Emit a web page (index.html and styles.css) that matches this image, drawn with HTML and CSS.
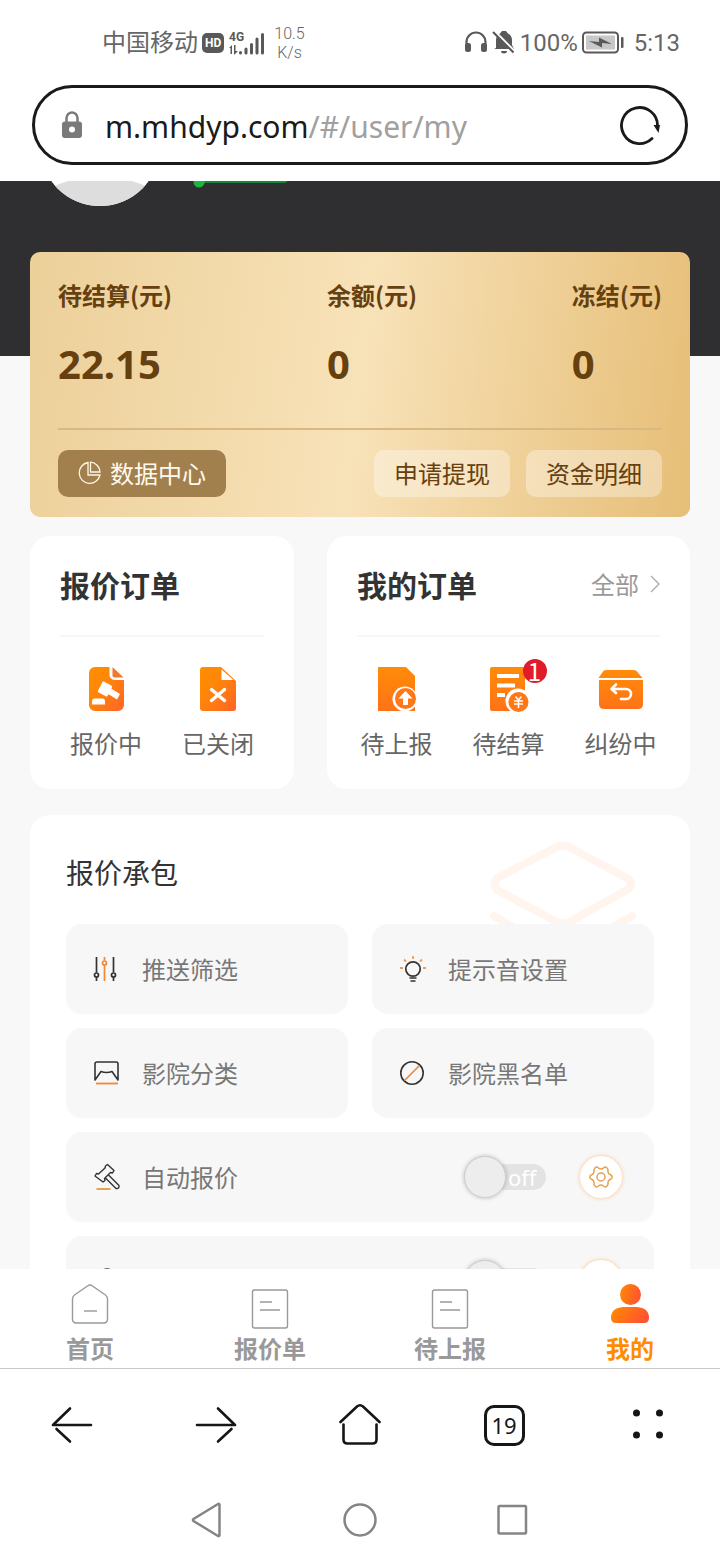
FILE: index.html
```html
<!DOCTYPE html>
<html lang="zh-CN">
<head>
<meta charset="utf-8">
<meta name="viewport" content="width=device-width, initial-scale=1">
<title>我的</title>
<link rel="stylesheet" href="styles.css">
</head>
<body>
<svg class="defs" width="0" height="0" aria-hidden="true">
  <defs>
    <linearGradient id="orange" x1="0" y1="0" x2="1" y2="1"><stop offset="0" stop-color="#ff8f00"/><stop offset="0.4" stop-color="#ff8609"/><stop offset="1" stop-color="#ff6428"/></linearGradient>
    <linearGradient id="orange-down" x1="0" y1="0" x2="0" y2="1"><stop offset="0" stop-color="#ff8c08"/><stop offset="1" stop-color="#ff7218"/></linearGradient>
    <linearGradient id="orange-side" x1="0" y1="0" x2="1" y2="0.3"><stop offset="0" stop-color="#ff8c00"/><stop offset="1" stop-color="#ff5530"/></linearGradient>
    <symbol id="gear" viewBox="0 0 24 24"><path d="M6 3Q7.500 1.200 9.500 3Q12 5 14.500 3Q16.500 1.200 18 3Q19.200 4 19 6Q18.800 8.500 21 9.500Q23.500 10.500 23 12Q23.500 13.500 21 14.500Q18.800 15.500 19 18Q19.200 20 18 21Q16.500 22.800 14.500 21Q12 19 9.500 21Q7.500 22.800 6 21Q4.800 20 5 18Q5.200 15.500 3 14.500Q.5 13.500 1 12Q.5 10.500 3 9.500Q5.200 8.500 5 6Q4.800 4 6 3Z" fill="none" stroke="#e6a04c" stroke-width="1.500" stroke-linejoin="round"/><circle cx="12" cy="12" r="4" fill="none" stroke="#e6a04c" stroke-width="1.500"/></symbol>
  </defs>
</svg>

<header class="status">
  <div class="status-group">
    <span class="carrier">中国移动</span>
    <span class="hd">HD</span>
    <svg width="38" height="28" viewBox="0 0 38 28" fill="#595959" role="img" aria-label="4G">
      <text class="net" x="1" y="12">4G</text>
      <path d="M1 19l3-3v9H2.500v-6zM6 16h1.500v6H10l-3.500 3.500H6z"/>
      <g stroke="#595959" stroke-width="3" stroke-linecap="round"><path d="M13.500 23.500v.5M19 20v4M24.500 15.500v8.500M30 10v14M35.500 5.500v18.500" transform="translate(-1 0)"/></g>
    </svg>
    <span class="speed">10.5<br>K/s</span>
  </div>
  <div class="status-group">
    <svg width="24" height="28" viewBox="0 0 24 28"><path d="M2.500 19v-6a9.500 9.500 0 0 1 19 0v6" fill="none" stroke="#595959" stroke-width="2.200"/><rect x="1" y="14" width="6" height="9" rx="2.500" fill="#595959"/><rect x="17" y="14" width="6" height="9" rx="2.500" fill="#595959"/></svg>
    <svg width="24" height="28" viewBox="0 0 24 28"><path d="M4 19V11a8 7.500 0 0 1 4-6.500L10 2h4l2 2.500a8 7.500 0 0 1 4 6.500v5l2 4H2zM9 22h6a3 2.500 0 0 1-6 0z" fill="#595959"/><path d="M1 1l23 23" stroke="#fff" stroke-width="3"/><path d="M1 3l20.500 20.500" stroke="#595959" stroke-width="2.200"/></svg>
    <span>100%</span>
    <svg class="battery" width="42" height="24" viewBox="0 0 42 24"><rect x="1" y="1.500" width="35" height="20" rx="3.500" fill="none" stroke="#595959" stroke-width="2"/><rect x="4" y="4.500" width="29" height="14" fill="#c8c8c8"/><path d="M7 10l10 1V6.500L30 13l-10-1v4.500z" fill="#595959"/><rect x="39" y="6" width="2.500" height="11" rx="1" fill="#595959"/></svg>
    <time>5:13</time>
  </div>
</header>

<div class="address-bar">
  <svg width="22" height="28" viewBox="0 0 22 28"><path d="M5.500 13V7a5.500 5.500 0 0 1 11 0v6" fill="none" stroke="#7a7a7a" stroke-width="2.500"/><path d="M4 10.500h14a3 3 0 0 1 3 3V24a3 3 0 0 1-3 3H4a3 3 0 0 1-3-3V13.500a3 3 0 0 1 3-3zM11 15.500a3 3 0 1 0 0 6 3 3 0 0 0 0-6z" fill="#7a7a7a" fill-rule="evenodd"/></svg>
  <button class="url" type="button">m.mhdyp.com<span>/#/user/my</span></button>
  <button class="plain" type="button" aria-label="刷新"><svg width="40" height="40" viewBox="0 0 40 40"><path d="M32 33.500A18 18 0 1 1 37.500 21" fill="none" stroke="#1a1a1a" stroke-width="2.800" stroke-linecap="round"/><path d="M33.500 20h6.500l-1.500 8z" fill="#1a1a1a"/></svg></button>
</div>

<main class="content">
  <section class="profile" aria-label="个人信息">
    <svg class="avatar" width="120" height="120" viewBox="0 0 120 120"><clipPath id="round"><circle cx="60" cy="60" r="60"/></clipPath><circle cx="60" cy="60" r="60" fill="#fff"/><ellipse cx="60" cy="124" rx="66" ry="33" fill="#dedddd" clip-path="url(#round)"/></svg>
    <svg class="level" width="96" height="32" viewBox="0 0 96 32"><path d="M0 0h96v23q0 4-4 4H12z" fill="#17863a"/><path d="M0 0h94v22q0 3-4 3H13a5.500 5.500 0 0 1-11-1z" fill="#1db53e"/><circle cx="7" cy="26" r="5.500" fill="#1db53e"/></svg>
  </section>

  <section class="wallet">
    <dl class="amounts">
      <div><dt>待结算(元)</dt><dd>22.15</dd></div>
      <div><dt>余额(元)</dt><dd>0</dd></div>
      <div><dt>冻结(元)</dt><dd>0</dd></div>
    </dl>
    <div class="wallet-actions">
      <button class="wallet-button data" type="button"><svg width="24" height="24" viewBox="0 0 24 24" fill="none" stroke="#fff8e8" stroke-width="1.300"><path d="M10 1.500A10.500 10.500 0 1 0 22 14H10z"/><path d="M12.500 1.200A10.300 10.300 0 0 1 22 11h-9.500z"/></svg>数据中心</button>
      <button class="wallet-button" type="button">申请提现</button>
      <button class="wallet-button" type="button">资金明细</button>
    </div>
  </section>

  <div class="orders">
    <section class="card">
      <div class="card-head"><h2>报价订单</h2></div>
      <div class="order-items">
        <a href="#bidding"><svg width="48" height="48" viewBox="0 0 48 48"><path d="M12 2h15.500v8a5 5 0 0 0 5 5H42v25a6 6 0 0 1-6 6H13a6 6 0 0 1-6-6V8a6 6 0 0 1 6-6z" fill="url(#orange)"/><path d="M30.500 2l11 10.500h-9q-2 0-2-2z" fill="#f4772c"/><g fill="#fff"><rect x="17.500" y="18" width="11" height="12" rx="1.500" transform="rotate(28 23 24)"/><path d="M26.500 22l11.500 7-3 5.500L23 27z"/><path d="M10 39.500v-3q0-3 3-3h7q3 0 3 3v3z"/></g></svg>报价中</a>
        <a href="#closed"><svg width="48" height="48" viewBox="0 0 48 48"><path d="M9 2h18l15 14v27q0 3-3 3H9q-3 0-3-3V5q0-3 3-3z" fill="url(#orange)"/><path d="M27.500 4.500V15h12z" fill="#fff"/><path d="M17.500 24.500l13 11m0-11l-13 11" stroke="#fff" stroke-width="3.400" stroke-linecap="round"/></svg>已关闭</a>
      </div>
    </section>
    <section class="card">
      <div class="card-head"><h2>我的订单</h2><a class="all" href="#orders">全部<svg width="10" height="18" viewBox="0 0 10 18"><path d="M1 1l8 8-8 8" fill="none" stroke="#aaa" stroke-width="1.300"/></svg></a></div>
      <div class="order-items">
        <a href="#pending"><svg width="48" height="48" viewBox="0 0 48 48"><path d="M5 2h28l9 9v35H5z" fill="url(#orange-down)"/><circle cx="32" cy="34" r="12.500" fill="#fff"/><circle cx="32.500" cy="33.500" r="10.500" fill="#ff7716"/><path d="M32.500 26l7 7.500H35V40h-5v-6.500h-4.500z" fill="#fff"/></svg>待上报</a>
        <a href="#settle"><svg width="48" height="48" viewBox="0 0 48 48"><path d="M7 2h31q2 0 2 2v42H7q-2 0-2-2V4q0-2 2-2z" fill="url(#orange-down)"/><path d="M12 11h22M12 20.500h18M12 30h8" stroke="#fff" stroke-width="4"/><circle cx="33" cy="36" r="12.500" fill="#fff"/><circle cx="33.500" cy="37" r="10" fill="#ff7716"/><path d="M30.500 31.500l3 3.500 3-3.500M29 36h9M29 39h9M33.500 35v8" fill="none" stroke="#fff" stroke-width="1.600"/></svg><span class="badge">1</span>待结算</a>
        <a href="#dispute"><svg width="48" height="48" viewBox="0 0 48 48"><path d="M9 5h28q2 0 3 1.500l5.500 6.500h-44L6 6.500Q7 5 9 5zM2 15h44v24q0 5-5 5H7q-5 0-5-5z" fill="url(#orange-down)"/><path d="M19 19.500L14.500 24l4.500 4M15 24h14a5 5 0 0 1 0 10h-5" fill="none" stroke="#fff" stroke-width="2.600" stroke-linecap="round" stroke-linejoin="round"/></svg>纠纷中</a>
      </div>
    </section>
  </div>

  <section class="card quoting">
    <svg class="watermark" width="148" height="130" viewBox="0 0 148 130" fill="none" stroke="#fff5ee" stroke-width="8" stroke-linejoin="round" stroke-linecap="round"><path d="M68 6q6-3 12 0l58 31q8 6 0 12L80 81q-6 3-12 0L8 49q-5-6 0-12zM5 75l68 40 70-40"/></svg>
    <h3>报价承包</h3>
    <div class="tiles">
      <a class="tile" href="#filter"><svg width="28" height="28" viewBox="0 0 28 28" fill="none" stroke="#333" stroke-width="1.700"><path d="M4.500 2v15.500M4.500 22v4M21.500 2v15.500M21.500 22v4"/><circle cx="4.500" cy="20" r="2"/><circle cx="21.500" cy="20" r="2"/><path d="M12.500 2v3.500M12.500 10v16" stroke="#f08a38"/><circle cx="12.500" cy="8" r="2" stroke="#f08a38"/></svg>推送筛选</a>
      <a class="tile" href="#sound"><svg width="28" height="28" viewBox="0 0 28 28" fill="none"><circle cx="15" cy="14" r="7.200" stroke="#333" stroke-width="1.700"/><path d="M11.500 23h7M12.500 26h5" stroke="#333" stroke-width="1.700"/><path d="M15 1v3M6 4.500l2 2M24 4.500l-2 2M2 13h3M25 13h3" stroke="#f09a58" stroke-width="1.800"/></svg>提示音设置</a>
      <a class="tile" href="#category"><svg width="28" height="28" viewBox="0 0 28 28" fill="none"><path d="M3 21V5q0-2 2-2h19q2 0 2 2v16l-6-8.500q-5.500 2-11 0z" stroke="#333" stroke-width="1.600" stroke-linejoin="round"/><path d="M4 24.500h22" stroke="#f08a38" stroke-width="1.800"/></svg>影院分类</a>
      <a class="tile" href="#blacklist"><svg width="28" height="28" viewBox="0 0 28 28" fill="none"><circle cx="14" cy="14" r="11.200" stroke="#333" stroke-width="1.600"/><path d="M6.500 21.500l15-15" stroke="#e88a48" stroke-width="1.700"/></svg>影院黑名单</a>
      <div class="tile wide">
        <svg width="28" height="28" viewBox="0 0 28 28" fill="none" stroke="#333" stroke-width="1.400" stroke-linejoin="round"><path d="M13.500 3l2-1.500 6.500 6-1.500 2.500-2-.5-6 6 .5 2-2 1.500L3 13l1.500-2.500 2 .5 6.500-6zM16.500 12l10.500 10.500q.5 3.500-3 3L13.500 15"/><path d="M4.500 26h14" stroke="#e0952c" stroke-width="1.700"/></svg>
        <span class="tile-name" id="auto-name">自动报价</span>
        <label class="switch"><input type="checkbox" aria-labelledby="auto-name"><span>off</span></label>
        <button class="gear" type="button" aria-label="自动报价设置"><svg width="24" height="24"><use href="#gear"/></svg></button>
      </div>
      <div class="tile wide">
        <svg width="28" height="28" viewBox="0 0 28 28" fill="none" stroke="#333" stroke-width="1.600"><path d="M15 2a7 7 0 0 1 7 7v11H8V9a7 7 0 0 1 7-7zM5 23h20"/></svg>
        <span class="tile-name"></span>
        <label class="switch"><input type="checkbox" aria-label="开关"></label>
        <button class="gear" type="button" aria-label="设置"><svg width="24" height="24"><use href="#gear"/></svg></button>
      </div>
    </div>
  </section>
</main>

<nav class="tabs">
  <a href="#home"><svg width="40" height="52" viewBox="0 0 40 52" fill="none" stroke="#999" stroke-width="1.400"><path d="M17.500 9q2.500-2 5 0l13 9q2 1.500 2 4v20q0 4-4 4h-27q-4 0-4-4V22q0-2.500 2-4z"/><path d="M14 34h13"/></svg>首页</a>
  <a href="#quotes"><svg width="40" height="52" viewBox="0 0 40 52" fill="none" stroke="#999" stroke-width="1.400"><rect x="2.500" y="13" width="35" height="38" rx="2"/><path d="M10 25h12M10 33h20"/></svg>报价单</a>
  <a href="#report"><svg width="40" height="52" viewBox="0 0 40 52" fill="none" stroke="#999" stroke-width="1.400"><rect x="2.500" y="13" width="35" height="38" rx="2"/><path d="M10 25h12M10 33h20"/></svg>待上报</a>
  <a class="active" href="#me"><svg width="40" height="52" viewBox="0 0 40 52" fill="url(#orange-side)"><circle cx="20.500" cy="17.500" r="10.500"/><path d="M1 41q0-10 12-11h14q12 1 12 11 0 5-5 5H6q-5 0-5-5z"/></svg>我的</a>
</nav>

<nav class="browser-nav" aria-label="浏览器">
  <button class="plain" type="button" aria-label="后退"><svg width="44" height="44" viewBox="0 0 44 44"><path d="M20 5.500L3 22h38M6.500 26L20 38.500" fill="none" stroke="#161616" stroke-width="2.600" stroke-linecap="round" stroke-linejoin="round"/></svg></button>
  <button class="plain" type="button" aria-label="前进"><svg width="44" height="44" viewBox="0 0 44 44"><path d="M24 5.500L41 22H3M37.500 26L24 38.500" fill="none" stroke="#161616" stroke-width="2.600" stroke-linecap="round" stroke-linejoin="round"/></svg></button>
  <button class="plain" type="button" aria-label="主页"><svg width="44" height="44" viewBox="0 0 44 44"><path d="M2.500 19.500L19 4q3-2.500 6 0l16.500 15.500M5.500 22v15q0 4 4 4h25q4 0 4-4V22" transform="translate(0 -.5)" fill="none" stroke="#161616" stroke-width="2.600" stroke-linecap="round"/></svg></button>
  <button class="tab-count" type="button">19</button>
  <button class="plain" type="button" aria-label="菜单"><svg width="44" height="44" viewBox="0 0 44 44" fill="#161616"><circle cx="10.500" cy="10" r="3.500"/><circle cx="33.500" cy="10" r="3.500"/><circle cx="10.500" cy="32" r="3.500"/><circle cx="33.500" cy="32" r="3.500"/></svg></button>
</nav>

<nav class="system-nav" aria-label="系统导航">
  <button class="plain" type="button" aria-label="返回"><svg width="36" height="36" viewBox="0 0 36 36"><path d="M30.500 2.500v31q-.5 1-1.500.5L4.500 19q-1-1 0-2L29 2q1-.5 1.500.5z" fill="none" stroke="#858585" stroke-width="2.500"/></svg></button>
  <button class="plain" type="button" aria-label="桌面"><svg width="36" height="36" viewBox="0 0 36 36"><circle cx="18" cy="18" r="15.500" fill="none" stroke="#858585" stroke-width="2.500"/></svg></button>
  <button class="plain" type="button" aria-label="最近任务"><svg width="36" height="36" viewBox="0 0 36 36"><rect x="3.500" y="4" width="27.500" height="27.500" rx="1" fill="none" stroke="#858585" stroke-width="2.500"/></svg></button>
</nav>
</body>
</html>
```

FILE: styles.css
```css
* { box-sizing: border-box; }

body {
  margin: 0;
  height: 100vh;
  display: flex;
  flex-direction: column;
  background: #fff;
  color: #666;
  font-family: "Noto Sans CJK SC", sans-serif;
  font-size: 24px;
  line-height: 32px;
}

h2, h3, dl, dd { margin: 0; }
a { color: inherit; text-decoration: none; }
svg { display: block; flex: none; }

button {
  font: inherit;
  color: inherit;
  border: 0;
  padding: 0;
  background: none;
  display: flex;
  align-items: center;
  justify-content: center;
}

.defs { position: absolute; }

/* Phone status bar */
.status {
  display: flex;
  justify-content: space-between;
  align-items: center;
  height: 85px;
  padding: 0 40px 0 102px;
  font-family: Roboto, "Noto Sans CJK SC", sans-serif;
}

.status-group { display: flex; align-items: center; gap: 4px; }

.hd {
  padding: 0 3px;
  border-radius: 5px;
  background: #595959;
  color: #fff;
  font-size: 12px;
  font-weight: 700;
  line-height: 20px;
}

.net { font: 700 12px Roboto, sans-serif; }
.speed { margin-left: 4px; font-size: 16px; font-weight: 300; line-height: 19px; text-align: center; }
.battery { margin-right: 6px; }

/* Browser address bar */
.address-bar {
  display: flex;
  align-items: center;
  gap: 22px;
  height: 80px;
  margin: 0 32px 16px;
  padding: 0 25px 0 26px;
  border: 3px solid #1a1a1a;
  border-radius: 40px;
}

.url {
  flex: 1;
  justify-content: flex-start;
  padding-top: 4px;
  color: #1a1a1a;
  font-family: "Noto Sans", sans-serif;
  font-size: 30px;
  line-height: 40px;
}

.url span { color: #a0a0a0; }

/* Scrolling page */
.content {
  flex: 1;
  min-height: 0;
  overflow: hidden;
  background: #f8f8f8;
}

.profile {
  display: flex;
  align-items: flex-start;
  gap: 32px;
  height: 175px;
  padding: 0 40px;
  background: #2f2f31;
}

.avatar { margin-top: -95px; }
.level { margin-top: -25px; }

.wallet {
  position: relative;
  margin: -104px 30px 19px;
  padding: 27px 28px 20px;
  border-radius: 10px;
  background: linear-gradient(97deg, #ecd09a, #f8e2b8 50%, #e6be77);
  color: #67400f;
}

.amounts {
  display: flex;
  justify-content: space-between;
  padding-bottom: 39px;
  border-bottom: 2px solid #d8b983;
  font-weight: 700;
}

.amounts dd {
  margin-top: 28px;
  font-family: "Noto Sans", sans-serif;
  font-size: 40px;
  line-height: 50px;
}

.wallet-actions { display: flex; gap: 16px; margin-top: 20px; }

.wallet-button {
  gap: 8px;
  height: 47px;
  padding: 0 20px 2px;
  border-radius: 10px;
  background: rgba(255, 255, 255, 0.35);
}

.wallet-button.data { margin-right: auto; background: #a2804d; color: #fffaf0; }

.orders {
  display: grid;
  grid-template-columns: 8fr 11fr;
  gap: 33px;
  margin: 0 30px 26px;
}

.card { border-radius: 20px; background: #fff; }
.orders .card { padding: 0 30px 30px; }

.card-head {
  display: flex;
  justify-content: space-between;
  align-items: center;
  padding: 26px 0 29px;
  border-bottom: 2px solid #f7f7f7;
}

.card-head h2 { color: #333; font-size: 30px; line-height: 44px; }
.all { display: flex; align-items: center; gap: 11px; color: #999; }

.order-items { display: flex; justify-content: center; gap: 40px; padding-top: 28px; }

.order-items a {
  position: relative;
  display: flex;
  flex-direction: column;
  align-items: center;
  gap: 14px;
  white-space: nowrap;
}

.badge {
  position: absolute;
  top: -6px;
  right: -2px;
  width: 24px;
  border-radius: 12px;
  background: #e11b2b;
  color: #fff;
  line-height: 24px;
  text-align: center;
}

/* Quoting tools */
.quoting { position: relative; margin: 0 30px; padding: 35px 36px; }
.quoting h3 { margin-bottom: 29px; color: #333; font-size: 28px; font-weight: 400; line-height: 45px; }
.watermark { position: absolute; top: 26px; right: 53px; }

.tiles { position: relative; display: grid; grid-template-columns: 1fr 1fr; gap: 14px 24px; }

.tile {
  display: flex;
  align-items: center;
  gap: 22px;
  height: 90px;
  padding: 0 32px 0 26px;
  border-radius: 16px;
  background: #f7f7f7;
  color: #777;
}

.wide { grid-column: 1 / -1; }
.tile-name { flex: 1; }

.switch {
  display: flex;
  align-items: center;
  width: 82px;
  height: 26px;
  margin-right: 12px;
  border-radius: 13px;
  background: #e3e3e3;
  color: #fff;
  font: 22px "Noto Sans", sans-serif;
}

.switch input {
  appearance: none;
  flex: none;
  width: 42px;
  height: 42px;
  margin: 0 2px 0 0;
  border: 1px solid #d0d0d0;
  border-radius: 50%;
  background: #ededed;
  box-shadow: 0 0 4px rgba(0, 0, 0, 0.25);
}

.gear {
  width: 42px;
  height: 42px;
  border-radius: 50%;
  background: #fff;
  box-shadow: 0 0 4px #fbc28d;
}

/* Site tab bar */
.tabs {
  display: grid;
  grid-template-columns: repeat(4, 1fr);
  padding: 8px 0 4px;
  color: #999;
  font-weight: 700;
}

.tabs a { display: flex; flex-direction: column; align-items: center; gap: 3px; }
.tabs .active { color: #ff8c00; }

/* Browser and system navigation */
.browser-nav {
  display: grid;
  grid-template-columns: repeat(5, 1fr);
  place-items: center;
  height: 113px;
  border-top: 1px solid #c8c8c8;
}

.tab-count {
  width: 41px;
  height: 41px;
  border: 3px solid #161616;
  border-radius: 10px;
  color: #161616;
  font-family: "Noto Sans", sans-serif;
  font-size: 22px;
}

.system-nav { display: flex; justify-content: center; align-items: center; gap: 117px; height: 79px; padding-bottom: 2px; }
```
